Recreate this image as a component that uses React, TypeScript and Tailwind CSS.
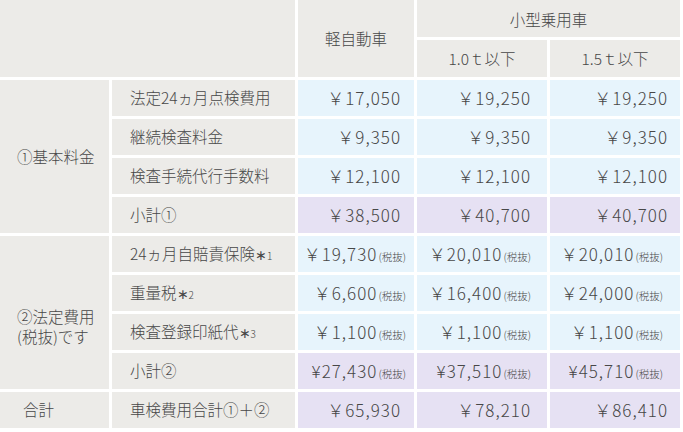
import React from "react";

const gray = "bg-[#ecebe8]";
const blue = "bg-[#e7f4fc]";
const lav = "bg-[#e6e1f3]";

function Tax() {
  return <span className="text-[10.5px] tracking-normal ml-[1px]">(税抜)</span>;
}

function Val({ v, tax, bg, pr }: { v: string; tax?: boolean; bg: string; pr: string }) {
  return (
    <div className={`${bg} flex items-center justify-end ${pr} text-[17px] tracking-[1px]`}>
      <span className="whitespace-nowrap">
        {v}
        {tax && <Tax />}
      </span>
    </div>
  );
}

function Label({ t }: { t: React.ReactNode }) {
  return <div className={`${gray} flex items-center pl-[18px] whitespace-nowrap`}>{t}</div>;
}

type Row = { label: React.ReactNode; vals: string[]; tax?: boolean; sub?: boolean };

const rows1: Row[] = [
  { label: "法定24ヵ月点検費用", vals: ["￥17,050", "￥19,250", "￥19,250"] },
  { label: "継続検査料金", vals: ["￥9,350", "￥9,350", "￥9,350"] },
  { label: "検査手続代行手数料", vals: ["￥12,100", "￥12,100", "￥12,100"] },
  { label: "小計①", vals: ["￥38,500", "￥40,700", "￥40,700"], sub: true },
];

const Star = ({ n }: { n: string }) => (
  <span>
    <span className="text-[14px]">∗</span>
    <span className="text-[10px]">{n}</span>
  </span>
);

const rows2: Row[] = [
  { label: <>24ヵ月自賠責保険<Star n="1" /></>, vals: ["￥19,730", "￥20,010", "￥20,010"], tax: true },
  { label: <>重量税<Star n="2" /></>, vals: ["￥6,600", "￥16,400", "￥24,000"], tax: true },
  { label: <>検査登録印紙代<Star n="3" /></>, vals: ["￥1,100", "￥1,100", "￥1,100"], tax: true },
  { label: "小計②", vals: ["¥27,430", "¥37,510", "¥45,710"], tax: true, sub: true },
];

function renderRow(r: Row, i: number) {
  const bg = r.sub ? lav : blue;
  const prs = r.tax ? ["pr-[8px]", "pr-[16px]", "pr-[17px]"] : ["pr-[13px]", "pr-[16px]", "pr-[12px]"];
  return (
    <React.Fragment key={i}>
      <Label t={r.label} />
      {r.vals.map((v, j) => (
        <Val key={j} v={v} tax={r.tax} bg={bg} pr={prs[j]} />
      ))}
    </React.Fragment>
  );
}

export default function App() {
  return (
    <div
      className="w-[683px] h-[432px] bg-white text-[#474747] text-[15.5px] font-light"
      style={{ fontFamily: '"Noto Sans CJK JP", "Noto Sans", sans-serif' }}
    >
      <div className="grid w-[680px] grid-cols-[109px_183px_116px_130px_130px] grid-rows-[37px_37px_repeat(9,36px)] gap-[3px]">
        <div className={`${gray} col-span-2 row-span-2`} />
        <div className={`${gray} row-span-2 flex items-center justify-center`}>軽自動車</div>
        <div className={`${gray} col-span-2 flex items-center justify-center pt-[3px]`}>小型乗用車</div>
        <div className={`${gray} flex items-center justify-center`}>1.0ｔ以下</div>
        <div className={`${gray} flex items-center justify-center`}>1.5ｔ以下</div>

        <div className={`${gray} row-span-4 flex items-center pl-[17px]`}>①基本料金</div>
        {rows1.map(renderRow)}

        <div className={`${gray} row-span-4 flex items-center pl-[17px] pt-[27px]`}>
          <div className="leading-[20px]">
            <div>②法定費用</div>
            <div>(税抜)です</div>
          </div>
        </div>
        {rows2.map((r, i) => renderRow(r, i + 10))}

        <div className={`${gray} flex items-center pl-[23px]`}>合計</div>
        <Label t="車検費用合計①＋②" />
        <Val v="￥65,930" bg={lav} pr="pr-[13px]" />
        <Val v="￥78,210" bg={lav} pr="pr-[16px]" />
        <Val v="￥86,410" bg={lav} pr="pr-[12px]" />
      </div>
    </div>
  );
}
